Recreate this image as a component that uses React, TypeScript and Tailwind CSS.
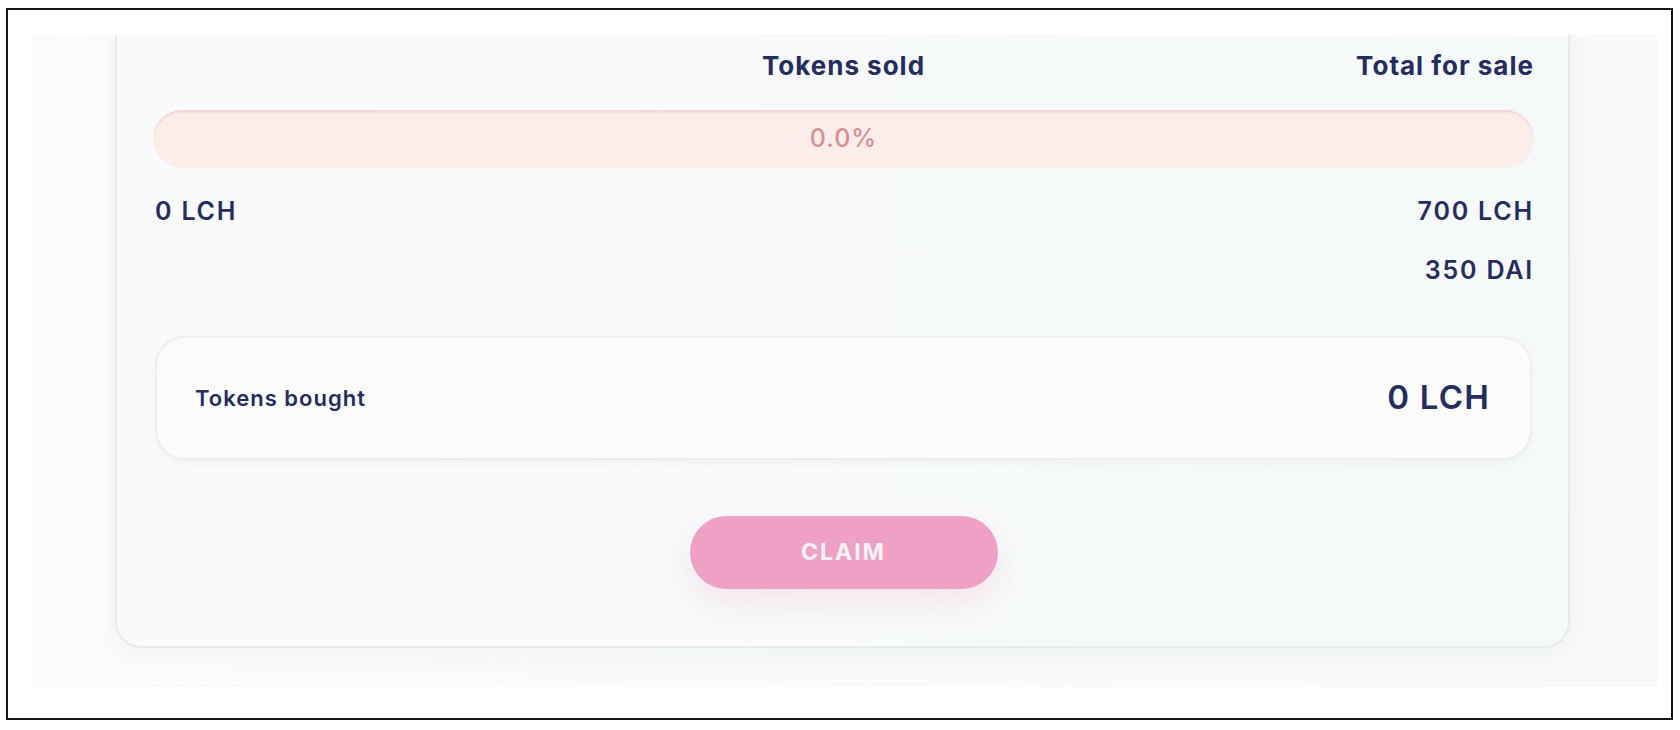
import React from 'react';

const navy = 'text-[#262c62]';

const StatRow: React.FC<{ left?: string; right?: string; className?: string }> = ({ left, right, className }) => (
  <div className={`flex items-center justify-between h-[30px] pl-[2px] text-[25px] font-semibold tracking-[1.8px] ${navy} ${className ?? ''}`}>
    <span>{left}</span>
    <span>{right}</span>
  </div>
);

export default function App() {
  return (
    <div className="w-[1680px] h-[730px] bg-white pt-[8px] pl-[6px] font-['Inter',sans-serif]">
      <div className="w-[1667px] h-[712px] border-2 border-[#141414] bg-white pt-[25px] pl-[24px] pr-[14px] pb-[31px]">
        <div className="h-full overflow-hidden bg-gradient-to-r from-[#fbfbfc] via-[#f8fafb] to-[#f7f9fa] pl-[83px] pr-[87px]">
          <div className="-mt-[30px] pt-[39px] pb-[57px] pl-[36px] pr-[34px] rounded-[26px] border-2 border-[#e8eaec] bg-gradient-to-r from-[#f9fafb] to-[#f5f9fa] shadow-[0_6px_24px_rgba(30,40,60,0.04)]">
            <div className={`grid grid-cols-3 items-center h-[32px] text-[26px] font-bold tracking-[1px] ${navy}`}>
              <span />
              <span className="text-center">Tokens sold</span>
              <span className="text-right">Total for sale</span>
            </div>

            <div className="mt-[32px] h-[58px] rounded-full bg-[#fbedea] shadow-[inset_0_3px_2px_-1px_rgba(236,190,184,0.55)] flex items-center justify-center">
              <span className="text-[25px] font-medium tracking-[1px] text-[#d7908f]">0.0%</span>
            </div>

            <StatRow left="0 LCH" right="700 LCH" className="mt-[29px]" />
            <StatRow right="350 DAI" className="mt-[29px]" />

            <div className="mt-[50px] mx-[2px] h-[124px] rounded-[30px] border-2 border-[#eceef0] bg-[#fbfbfc] shadow-[0_3px_10px_rgba(30,40,60,0.03)] flex items-center justify-between pl-[38px] pr-[40px]">
              <span className={`text-[22px] font-semibold tracking-[1px] ${navy}`}>Tokens bought</span>
              <span className={`text-[33px] font-semibold tracking-[1.2px] ${navy}`}>0 LCH</span>
            </div>

            <div className="mt-[56px] flex justify-center">
              <button className="w-[308px] h-[73px] rounded-full bg-[#eea0c5] text-[23px] font-bold tracking-[2px] text-[#fdf3f7] shadow-[0_14px_30px_rgba(238,160,197,0.22)]">
                CLAIM
              </button>
            </div>
          </div>
        </div>
      </div>
    </div>
  );
}
